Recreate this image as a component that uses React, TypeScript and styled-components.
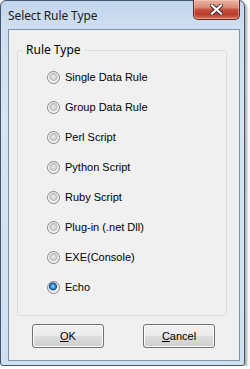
import styled, { createGlobalStyle } from 'styled-components';

const GlobalStyle = createGlobalStyle`
  html, body {
    margin: 0;
    padding: 0;
    background: #ffffff;
  }
  * {
    box-sizing: border-box;
  }
`;

const ruleTypes = [
  'Single Data Rule',
  'Group Data Rule',
  'Perl Script',
  'Python Script',
  'Ruby Script',
  'Plug-in (.net Dll)',
  'EXE(Console)',
  'Echo',
];

const Window = styled.div`
  width: 245px;
  height: 366px;
  display: flex;
  flex-direction: column;
  padding: 0 4px 4px 7px;
  border: 1px solid #4a5563;
  border-radius: 6px 6px 3px 3px;
  background: linear-gradient(180deg, #c2d6ed 0px, #cfdff1 28px, #d6e4f3 120px, #cfe0f2 100%);
  box-shadow: 2px 2px 3px rgba(0, 0, 0, 0.35);
`;

const TitleBar = styled.div`
  height: 28px;
  display: flex;
  align-items: center;
  flex-shrink: 0;
`;

const Title = styled.span`
  font-family: 'Noto Sans', 'Open Sans', sans-serif;
  font-size: 12px;
  color: #1b1b1b;
  letter-spacing: -0.1px;
`;

const CloseButton = styled.button`
  margin-left: auto;
  align-self: flex-start;
  margin-top: -1px;
  width: 47px;
  height: 20px;
  padding: 0;
  display: flex;
  align-items: center;
  justify-content: center;
  border: 1px solid #5b2a23;
  border-top: none;
  border-radius: 0 0 5px 5px;
  background: linear-gradient(
    180deg,
    #eab3a3 0%,
    #d98a76 40%,
    #c6513f 50%,
    #b93a27 75%,
    #d9775c 100%
  );
  box-shadow: inset 0 0 0 1px rgba(255, 210, 200, 0.45);
`;

const Client = styled.div`
  flex: 1;
  display: flex;
  flex-direction: column;
  border: 1px solid #8193a8;
  background: #f0f0f0;
  padding: 12px 11px 0 8px;
`;

const GroupBox = styled.fieldset`
  margin: 0;
  width: 210px;
  height: 274px;
  padding: 4px 0 0 0;
  border: 1px solid #d5dfe5;
  border-radius: 3px;
`;

const Legend = styled.legend`
  margin-left: 5px;
  padding: 0 3px;
  font-family: 'Noto Sans', 'Open Sans', sans-serif;
  font-size: 12px;
  line-height: 16px;
  color: #000000;
`;

const RadioList = styled.div`
  display: flex;
  flex-direction: column;
  padding-left: 29px;
`;

const RadioRow = styled.label`
  height: 30px;
  display: flex;
  align-items: center;
  gap: 5px;
  font-family: 'Liberation Sans', Arial, sans-serif;
  font-size: 11px;
  color: #000000;
`;

const Radio = styled.input`
  appearance: none;
  margin: 0;
  width: 13px;
  height: 13px;
  border-radius: 50%;
  border: 1px solid #858585;
  background: radial-gradient(
    circle at 50% 45%,
    #f2f2f2 0,
    #d6d6d6 2px,
    #bdbdbd 3.6px,
    #e6e6e6 4.3px,
    #f6f6f6 5px,
    #fdfdfd 100%
  );
  flex-shrink: 0;

  &:checked {
    background: radial-gradient(
      circle at 45% 40%,
      #a8e0fb 0,
      #3c9ee0 1.8px,
      #1769b8 3px,
      #0c4c8e 3.6px,
      #d8d8d8 4.3px,
      #f6f6f6 5px,
      #fdfdfd 100%
    );
  }
`;

const ButtonRow = styled.div`
  display: flex;
  gap: 39px;
  padding-left: 15px;
  margin-top: 8px;
`;

const DialogButton = styled.button`
  width: 72px;
  height: 24px;
  padding: 0;
  border: 1px solid #707070;
  border-radius: 3px;
  background: linear-gradient(180deg, #f2f2f2 0%, #ebebeb 48%, #dddddd 52%, #cfcfcf 100%);
  box-shadow: inset 0 0 0 1px #fcfcfc;
  font-family: 'Liberation Sans', Arial, sans-serif;
  font-size: 11px;
  color: #000000;

  u {
    text-decoration: underline;
  }
`;

const CloseGlyph = () => (
  <svg width="13" height="11" viewBox="0 0 13 11">
    <path d="M2 1.5 L11 9.5 M11 1.5 L2 9.5" stroke="#3a2a2a" strokeWidth="4" strokeLinecap="square" />
    <path d="M2 1.5 L11 9.5 M11 1.5 L2 9.5" stroke="#ffffff" strokeWidth="2.2" strokeLinecap="square" />
  </svg>
);

export default function App() {
  const selected = 'Echo';
  return (
    <>
      <GlobalStyle />
      <Window>
        <TitleBar>
          <Title>Select Rule Type</Title>
          <CloseButton aria-label="Close">
            <CloseGlyph />
          </CloseButton>
        </TitleBar>
        <Client>
          <GroupBox>
            <Legend>Rule Type</Legend>
            <RadioList>
              {ruleTypes.map((name) => (
                <RadioRow key={name}>
                  <Radio type="radio" name="ruleType" defaultChecked={name === selected} />
                  {name}
                </RadioRow>
              ))}
            </RadioList>
          </GroupBox>
          <ButtonRow>
            <DialogButton>
              <u>O</u>K
            </DialogButton>
            <DialogButton>
              <u>C</u>ancel
            </DialogButton>
          </ButtonRow>
        </Client>
      </Window>
    </>
  );
}
